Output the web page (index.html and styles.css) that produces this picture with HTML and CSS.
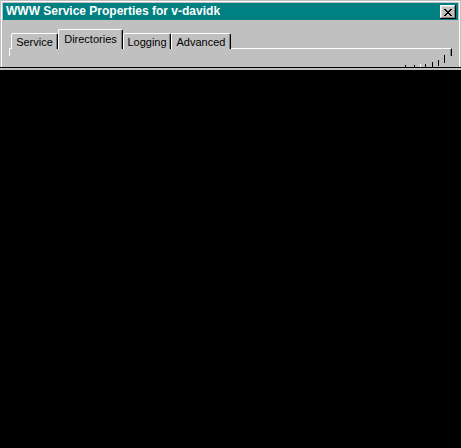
FILE: index.html
```html
<!DOCTYPE html>
<html>
<head>
<meta charset="utf-8">
<title>WWW Service Properties</title>
<link rel="stylesheet" href="styles.css">
</head>
<body>
<div class="window">
  <div class="titlebar">
    <span class="title">WWW Service Properties for v-davidk</span>
    <button class="close" aria-label="Close">
      <svg width="8" height="7" viewBox="0 0 8 7" shape-rendering="crispEdges"><path fill="#000" d="M0 0h2v1H0z M6 0h2v1H6z M1 1h2v1H1z M5 1h2v1H5z M2 2h4v1H2z M3 3h2v1H3z M2 4h4v1H2z M1 5h2v1H1z M5 5h2v1H5z M0 6h2v1H0z M6 6h2v1H6z"/></svg>
    </button>
  </div>
  <div class="tabs">
    <div class="tab tab-service">Service</div>
    <div class="tab tab-dirs active">Directories</div>
    <div class="tab tab-log">Logging</div>
    <div class="tab tab-adv">Advanced</div>
  </div>
  <div class="panel"></div>
  <svg class="glitch" width="81" height="20" viewBox="0 0 81 20" shape-rendering="crispEdges">
    <rect x="64" y="7" width="1" height="8" fill="#000"/>
    <rect x="58" y="12" width="1" height="6" fill="#000"/>
    <rect x="52" y="14" width="1" height="5" fill="#000"/>
    <rect x="45" y="16" width="1" height="3" fill="#000"/>
    <rect x="40" y="16" width="1" height="3" fill="#fff"/>
    <rect x="34" y="17" width="1" height="2" fill="#000"/>
    <rect x="25" y="17" width="1" height="2" fill="#000"/>
  </svg>
</div>
<div class="edge"></div>
</body>
</html>
```

FILE: styles.css
```css
html, body {
  margin: 0;
  padding: 0;
  background: #000;
}
body {
  width: 461px;
  height: 448px;
  overflow: hidden;
  font-family: "Liberation Sans", Arial, sans-serif;
}
.window {
  position: relative;
  width: 461px;
  height: 67px;
  box-sizing: border-box;
  padding: 3px 3px 0 3px;
  background: #c0c0c0;
  box-shadow: inset 1px 1px 0 #c0c0c0, inset -1px 0 0 #c0c0c0, inset 2px 2px 0 #fff, inset -2px 0 0 #fff;
}
.titlebar {
  display: flex;
  justify-content: space-between;
  align-items: flex-start;
  height: 17px;
  background: #008080;
}
.title {
  color: #fff;
  font-weight: bold;
  font-size: 12px;
  line-height: 17px;
  padding-left: 3px;
  white-space: nowrap;
}
.close {
  width: 16px;
  height: 14px;
  margin: 2px 2px 0 0;
  padding: 0;
  border: none;
  background: #c0c0c0;
  box-shadow: inset -1px -1px 0 #000, inset 1px 1px 0 #fff, inset -2px -2px 0 #808080, inset 2px 2px 0 #dfdfdf;
  display: flex;
  align-items: center;
  justify-content: center;
}
.close svg {
  display: block;
}
.tabs {
  display: flex;
  align-items: flex-end;
  height: 20px;
  margin-top: 9px;
  padding-left: 8px;
}
.tab {
  box-sizing: border-box;
  height: 16px;
  border-top: 1px solid #fff;
  border-left: 1px solid #fff;
  border-right: 1px solid #000;
  border-radius: 2px 2px 0 0;
  box-shadow: inset -1px 0 0 #808080;
  background: #c0c0c0;
  font-size: 11px;
  line-height: 13px;
  padding-top: 2px;
  text-align: center;
  color: #000;
  white-space: nowrap;
}
.tab-service { width: 47px; }
.tab-dirs { width: 65px; }
.tab-log { width: 48px; }
.tab-adv { width: 60px; }
.tab.active {
  height: 20px;
  padding-top: 3px;
  position: relative;
  z-index: 1;
}
.panel {
  margin: -1px 0 0 6px;
  width: 443px;
  height: 8px;
  box-sizing: border-box;
  border-top: 1px solid #fff;
  border-left: 1px solid #fff;
  border-right: 1px solid #000;
  box-shadow: inset -1px 0 0 #808080;
}
.glitch {
  position: absolute;
  left: 380px;
  top: 48px;
  display: block;
}
.edge {
  width: 461px;
  height: 2px;
  margin-top: 1px;
  background: #c0c0c0;
}
```
